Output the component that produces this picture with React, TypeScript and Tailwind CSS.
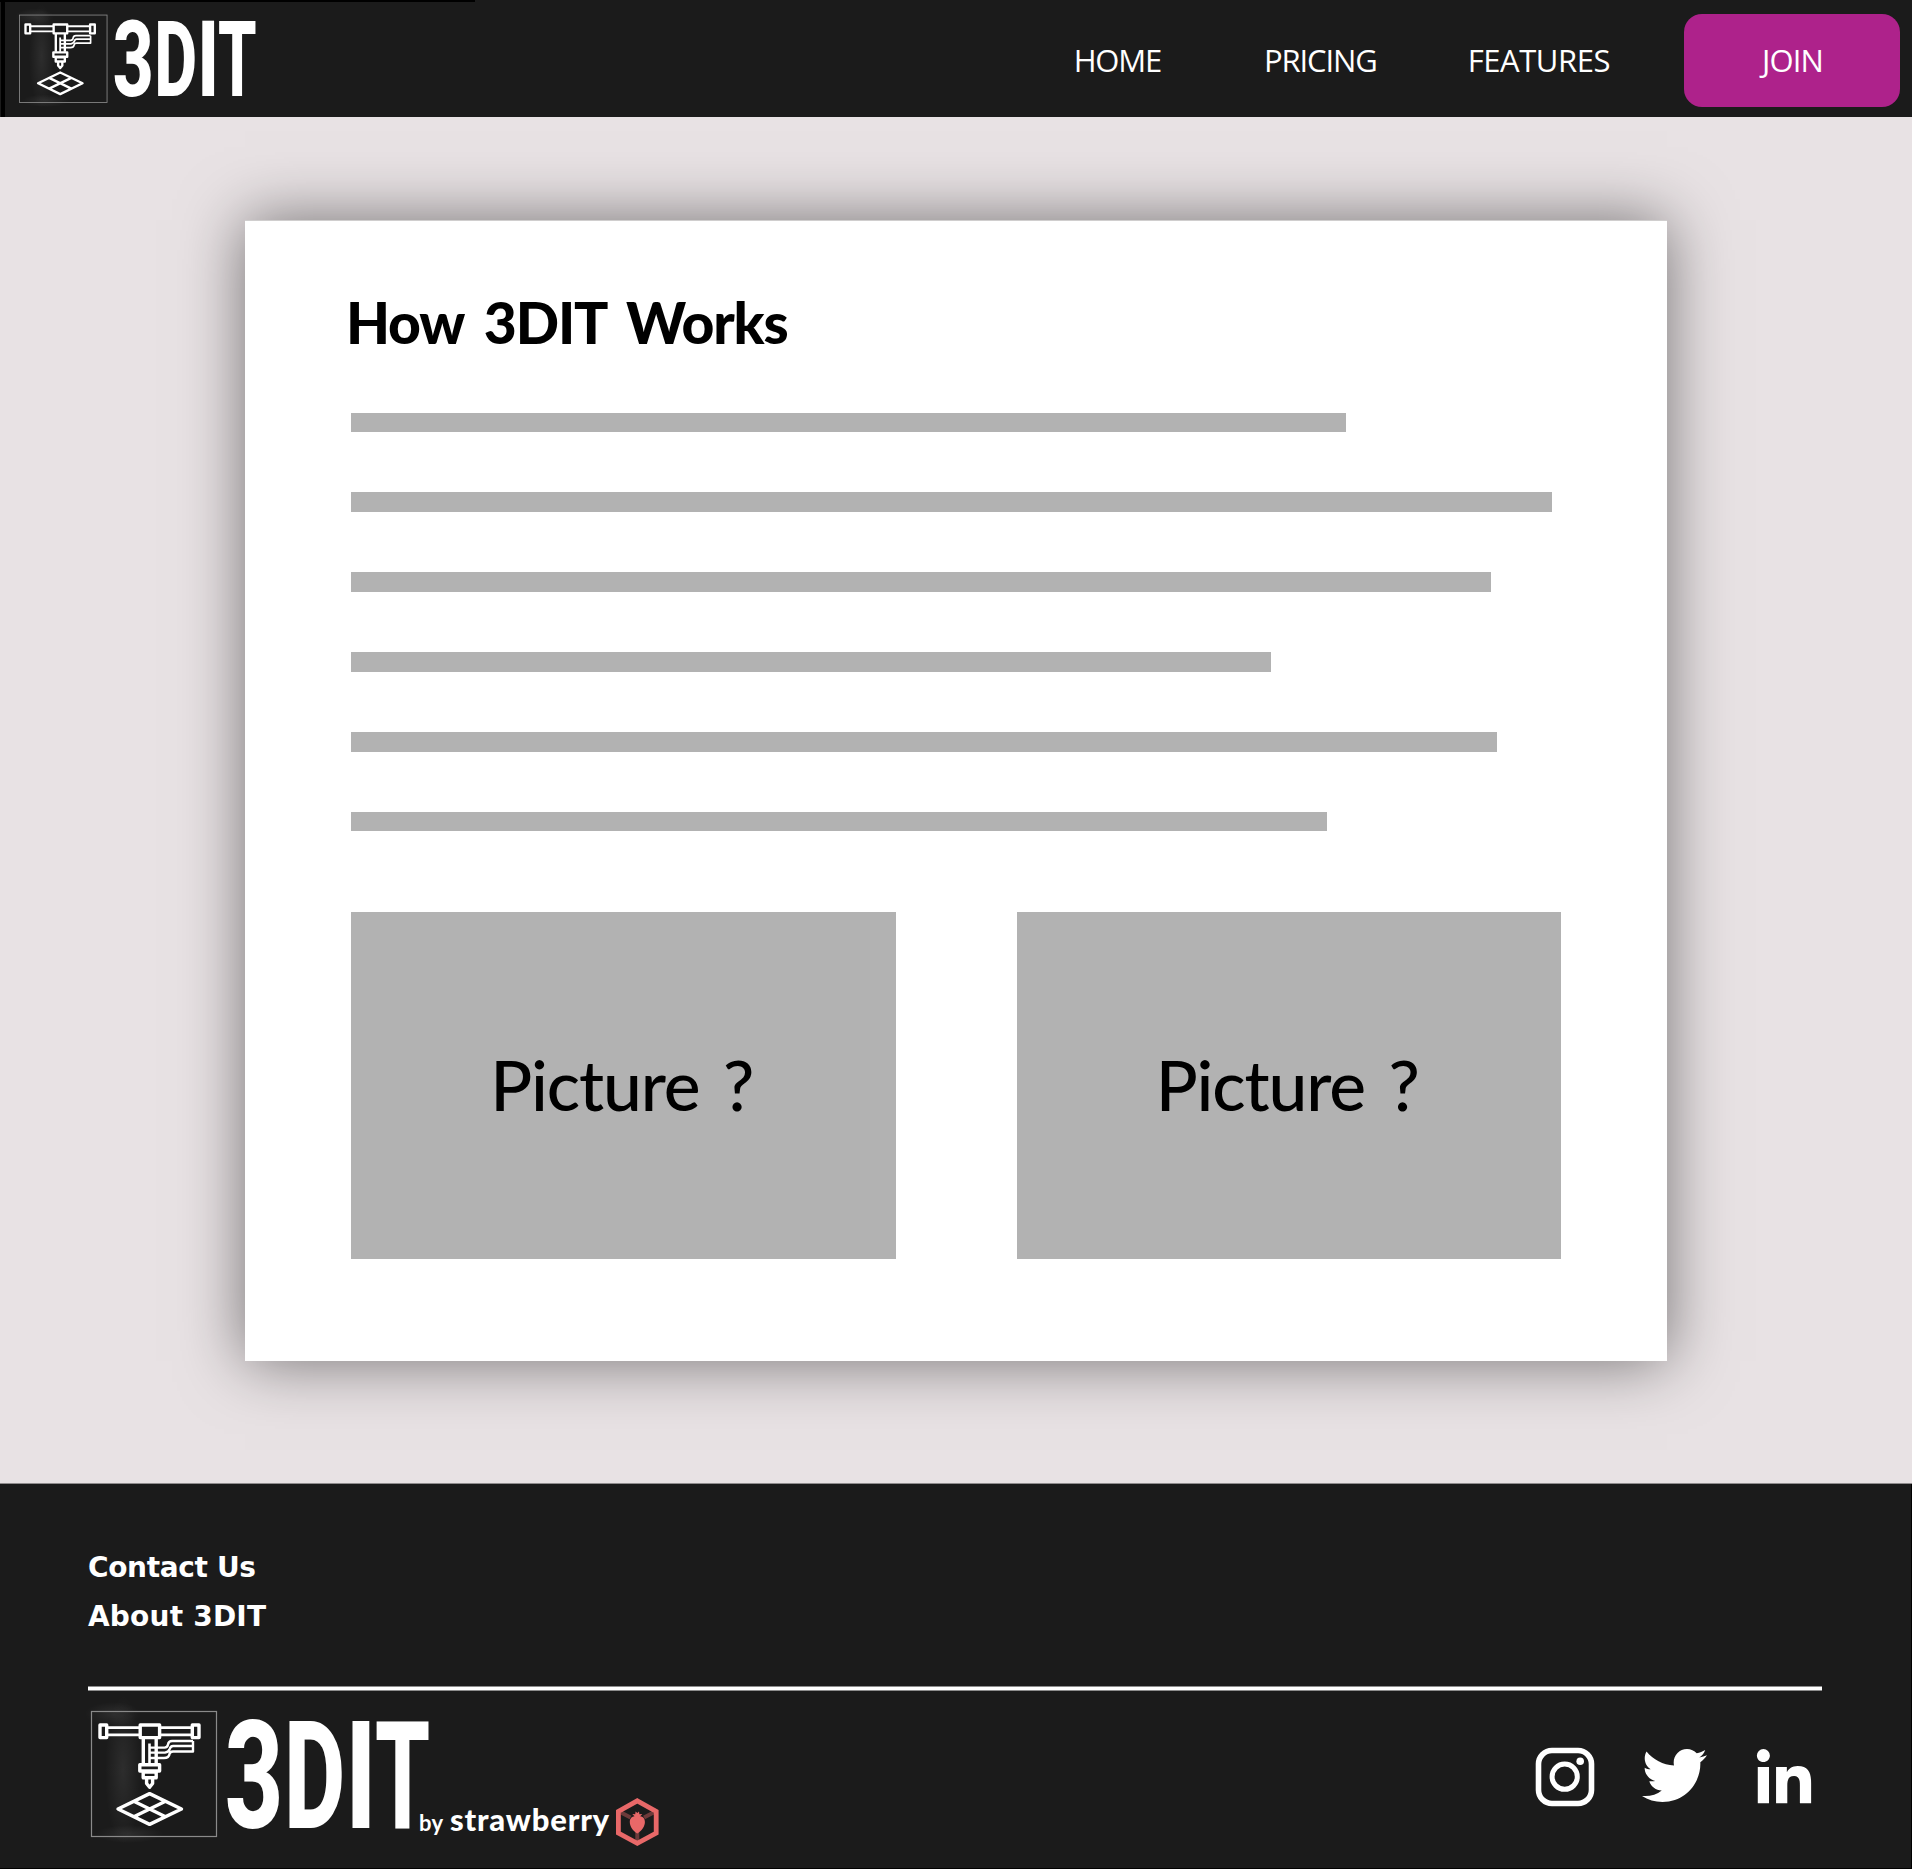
import { FaLinkedinIn, FaTwitter } from 'react-icons/fa';

function Logo({ className }: { className: string }) {
  return (
    <svg viewBox="0 0 350 145" className={`overflow-visible ${className}`} fill="none" stroke="#fff">
      <defs>
        <radialGradient id="haze">
          <stop offset="0" stopColor="#fff" stopOpacity="0.08" />
          <stop offset="1" stopColor="#fff" stopOpacity="0" />
        </radialGradient>
      </defs>
      <g fill="url(#haze)" stroke="none">
        <ellipse cx="28" cy="14" rx="28" ry="12" />
        <ellipse cx="38" cy="70" rx="18" ry="75" />
        <ellipse cx="44" cy="134" rx="34" ry="9" />
      </g>
      <rect x="6.5" y="11.5" width="125" height="125" stroke="#8a8a8a" strokeWidth="1.2" />
      <g strokeWidth="3.4" strokeLinejoin="round">
        <rect x="15" y="25" width="6.7" height="12.6" />
        <rect x="107.3" y="25" width="6.7" height="12.6" />
        <rect x="55.2" y="25" width="19.4" height="12.6" />
        <path strokeWidth="2.8" d="M22 27.6H55M22 34.8H55M75 27.6H107M75 34.8H107" />
        <path d="M58.3 38V64M71.2 38V64" />
        <path d="M64.5 43.5V64" strokeWidth="2.6" />
        <path strokeWidth="2.4" d="M65 47.6H79.500Q82.500 47.600 83 44.500Q83.500 41 87 41H108M65 52.600H80Q83.500 52 84.500 49.500Q85.500 46 88 46H108M65 58H79Q84 58 84.500 54Q85 51.500 88 51.500H108V41" />
        <rect x="54.8" y="64.8" width="19.8" height="6.2" />
        <rect x="58.2" y="72" width="13" height="5.8" />
        <path d="M61.600 78V83.500L64.600 87.300L67.600 83.500V78" />
        <path d="M64.600 93.600L96.500 109L64.600 124.400L33 109ZM48.800 101.300L80.500 116.700M80.500 101.300L48.800 116.700" />
      </g>
      <g fill="#fff" stroke="none" className="font-['Roboto'] text-[150.5px] font-extrabold">
        <text transform="translate(139.8 127.7) scale(.675 1)">3</text>
        <text transform="translate(199.1 127.7) scale(.628 1)">D</text>
        <text transform="translate(260.3 127.7) scale(.7 1)">I</text>
        <text transform="translate(289.9 127.7) scale(.586 1)">T</text>
      </g>
    </svg>
  );
}

function StrawberryMark() {
  return (
    <svg viewBox="0 0 44 50" className="h-[50px] w-11" fill="none">
      <path d="M22.300 3.800L41.200 14.300V36L22.300 46.300L3.400 36V14.300Z" stroke="#e86868" strokeWidth="4.800" />
      <path d="M6 15.500L15.500 20.500M38.600 15.500L29 20.500M22.300 45V35" stroke="#e86868" strokeOpacity="0.4" strokeWidth="4" />
      <path d="M22.300 36.500C18 34 14.800 29.500 14.800 25C14.800 21.500 17 19.500 19.500 19.300L17.300 17L20.200 17.300L20.600 14.600L22.300 16L24 14.600L24.400 17.300L27.300 17L25.200 19.300C27.800 19.500 29.900 21.500 29.900 25C29.900 29.500 26.600 34 22.300 36.500Z" fill="#e86868" />
    </svg>
  );
}

function InstagramMark() {
  return (
    <svg viewBox="0 0 60 60" className="size-[60px]" fill="none" stroke="#fff">
      <rect x="3.500" y="3.500" width="53" height="53" rx="13.500" strokeWidth="5.600" />
      <circle cx="29.700" cy="29.700" r="12.600" strokeWidth="5" />
      <circle cx="45.200" cy="14.200" r="3.800" fill="#fff" stroke="none" />
    </svg>
  );
}

const barWidths = ['w-[995px]', 'w-[1201px]', 'w-[1140px]', 'w-[920px]', 'w-[1146px]', 'w-[976px]'];

function Picture() {
  return (
    <div className="flex h-[347px] w-[545px] items-center justify-center bg-[#b2b2b2] pr-[3px] pb-[2px] font-['Lato',sans-serif] text-[69.5px] leading-none font-medium tracking-[-1.1px] [word-spacing:7px]">
      Picture ?
    </div>
  );
}

export default function App() {
  return (
    <div className="flex h-[1869px] w-[1912px] flex-col overflow-hidden bg-[#e8e2e4] text-black">
      <header className="relative flex h-[117px] shrink-0 items-start bg-[#1b1b1b]">
        <div className="absolute top-0 left-0 h-[2px] w-[475px] bg-black" />
        <div className="absolute top-0 left-[1px] h-[117px] w-1 bg-black" />
        <Logo className="mt-[6.8px] ml-[15px] h-[101.5px] w-[245px]" />
        <nav className="ml-auto flex h-full items-center pt-[3px] font-['Open_Sans',sans-serif] text-[31px] leading-none text-white">
          <a className="mr-[103px] tracking-[-1.2px]">HOME</a>
          <a className="mr-[91px] tracking-[-1.1px]">PRICING</a>
          <a className="mr-[74px] tracking-[-0.45px]">FEATURES</a>
        </nav>
        <button className="mt-[14px] mr-3 h-[93px] w-[216px] rounded-[18px] bg-[#ae228b] pl-px font-['Open_Sans',sans-serif] text-[31px] leading-none tracking-[-0.8px] text-white">
          JOIN
        </button>
      </header>

      <main className="flex h-[1367px] shrink-0 justify-center border-b border-[#8f8c8d] pt-[103px]">
        <section className="h-[1141px] w-[1422px] border-t border-[#d0cece] bg-white px-[106px] pt-[67px] shadow-[0_0_60px_rgba(0,0,0,0.5)]">
          <h1 className="-ml-[5px] h-[124.5px] font-['Lato',sans-serif] text-[57px] leading-[69px] font-black tracking-[-1.2px] [word-spacing:8.5px]">
            How 3DIT Works
          </h1>
          <div className="flex flex-col gap-[60.4px]">
            {barWidths.map((w) => (
              <div key={w} className={`h-[19.5px] bg-[#b2b2b2] ${w}`} />
            ))}
          </div>
          <div className="mt-[80.5px] flex gap-[121px]">
            <Picture />
            <Picture />
          </div>
        </section>
      </main>

      <footer className="h-[385px] shrink-0 border-r border-b border-black bg-[#1b1b1b] px-[88px] pt-[59px] text-white">
        <ul className="h-[143px] font-['DejaVu_Sans',sans-serif] text-[28px] leading-[49px] font-bold">
          <li className="tracking-[-0.35px]">Contact Us</li>
          <li className="tracking-[0.2px]">About 3DIT</li>
        </ul>
        <div className="h-[5px] w-[1734px] border-y border-[#8d8d8d] bg-white" />
        <div className="-ml-[3px] flex items-start pt-[9px]">
          <Logo className="h-[145px] w-[350px]" />
          <div className="-ml-[16px] flex items-baseline pt-[101px] font-['Lato',sans-serif] leading-[36px]">
            <span className="w-[31px] text-[22px] font-bold tracking-[0.4px]">by</span>
            <span className="w-[165px] text-[31px] font-black tracking-[0.8px]">strawberry</span>
          </div>
          <div className="pt-[97px]">
            <StrawberryMark />
          </div>
          <div className="mt-[43.5px] mr-[8px] ml-auto flex h-[66px] items-center">
            <InstagramMark />
            <FaTwitter className="-mt-0.5 ml-[47px] size-[65px]" />
            <FaLinkedinIn className="mt-[6px] ml-[46px] size-[62px]" />
          </div>
        </div>
      </footer>
    </div>
  );
}
